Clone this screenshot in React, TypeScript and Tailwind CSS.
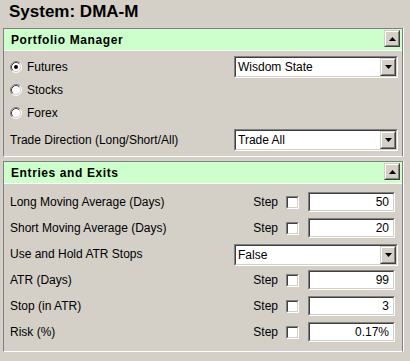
import React from "react";

const font = { fontFamily: '"Liberation Sans", Arial, sans-serif' };

function Raised({ children, className = "" }: { children: React.ReactNode; className?: string }) {
  return (
    <div className={`border border-t-[#d4d0c8] border-l-[#d4d0c8] border-b-[#404040] border-r-[#404040] ${className}`}>
      <div className="w-full h-full border border-t-white border-l-white border-b-[#808080] border-r-[#808080] bg-[#d4d0c8] flex items-center justify-center">
        {children}
      </div>
    </div>
  );
}

function Inset({ children, className = "" }: { children: React.ReactNode; className?: string }) {
  return (
    <div className={`border border-t-[#808080] border-l-[#808080] border-b-white border-r-white ${className}`}>
      <div className="w-full h-full border border-t-[#404040] border-l-[#404040] border-b-[#d4d0c8] border-r-[#d4d0c8] bg-white flex items-center">
        {children}
      </div>
    </div>
  );
}

function Tri({ up }: { up?: boolean }) {
  return (
    <svg width="7" height="4" viewBox="0 0 7 4">
      <path d={up ? "M3.5 0 L7 4 L0 4 Z" : "M0 0 L7 0 L3.5 4 Z"} fill="#000" />
    </svg>
  );
}

function Select({ value }: { value: string }) {
  return (
    <Inset className="w-[164px] h-[22px]">
      <span className="flex-1 pl-[2px] text-[12px] text-black leading-none">{value}</span>
      <Raised className="w-[16px] h-[18px]">
        <Tri />
      </Raised>
    </Inset>
  );
}

function Radio({ checked, label }: { checked?: boolean; label: string }) {
  return (
    <div className="flex items-center gap-[5px]">
      <svg width="12" height="12" viewBox="0 0 12 12">
        <circle cx="6" cy="6" r="5" fill="#fff" />
        <path d="M2.11 9.89 A5.5 5.5 0 0 1 9.89 2.11" stroke="#808080" fill="none" />
        <path d="M9.89 2.11 A5.5 5.5 0 0 1 2.11 9.89" stroke="#fff" fill="none" />
        <path d="M2.82 9.18 A4.5 4.5 0 0 1 9.18 2.82" stroke="#404040" fill="none" />
        <path d="M9.18 2.82 A4.5 4.5 0 0 1 2.82 9.18" stroke="#d4d0c8" fill="none" />
        {checked && <circle cx="6" cy="6" r="2" fill="#000" />}
      </svg>
      <span className="text-[12px] text-black">{label}</span>
    </div>
  );
}

function Header({ title }: { title: string }) {
  return (
    <div className="h-[22px] bg-[#ccffcc] border-b border-white flex items-center justify-between pl-[7px] pr-[2px]">
      <span className="text-[12px] font-bold text-black tracking-[0.6px]">{title}</span>
      <Raised className="w-[16px] h-[17px] mb-[2px]">
        <Tri up />
      </Raised>
    </div>
  );
}

function Panel({ title, children }: { title: string; children: React.ReactNode }) {
  return (
    <div className="ml-[3px] w-[400px] border-l border-t border-r border-[#808080] border-b border-b-white shadow-[1px_0_0_#fff]">
      <Header title={title} />
      {children}
    </div>
  );
}

function StepRow({ label, value }: { label: string; value: string }) {
  return (
    <div className="h-[26px] flex items-start justify-between">
      <span className="text-[12px] text-black leading-[20px]">{label}</span>
      <div className="flex items-center h-[20px] mr-[3px]">
        <span className="text-[12px] text-black mr-[8px]">Step</span>
        <Inset className="w-[13px] h-[13px] mr-[9px]">
          <span />
        </Inset>
        <Inset className="w-[87px] h-[20px]">
          <span className="flex-1 text-right pr-[4px] text-[12px] text-black leading-none">{value}</span>
        </Inset>
      </div>
    </div>
  );
}

export default function App() {
  return (
    <div className="w-[410px] h-[361px] bg-[#d4d0c8] overflow-hidden" style={font}>
      <div className="h-[28px] pl-[9px] pt-[1px] text-[17px] font-bold text-black leading-[22px]">System: DMA-M</div>
      <Panel title="Portfolio Manager">
        <div className="pl-[6px] pr-[4px] pt-[5px] pb-[5px]">
          <div className="h-[22px] flex items-center justify-between">
            <Radio checked label="Futures" />
            <Select value="Wisdom State" />
          </div>
          <div className="h-[23px] flex items-center">
            <Radio label="Stocks" />
          </div>
          <div className="h-[23px] flex items-center">
            <Radio label="Forex" />
          </div>
          <div className="h-[22px] mt-[5px] flex items-center justify-between">
            <span className="text-[12px] text-black">Trade Direction (Long/Short/All)</span>
            <Select value="Trade All" />
          </div>
        </div>
      </Panel>
      <div className="h-[4px]" />
      <Panel title="Entries and Exits">
        <div className="pl-[6px] pr-[4px] pt-[8px] pb-[3px]">
          <StepRow label="Long Moving Average (Days)" value="50" />
          <StepRow label="Short Moving Average (Days)" value="20" />
          <div className="h-[26px] flex items-start justify-between">
            <span className="text-[12px] text-black leading-[21px]">Use and Hold ATR Stops</span>
            <Select value="False" />
          </div>
          <StepRow label="ATR (Days)" value="99" />
          <StepRow label="Stop (in ATR)" value="3" />
          <StepRow label="Risk (%)" value="0.17%" />
        </div>
      </Panel>
    </div>
  );
}
